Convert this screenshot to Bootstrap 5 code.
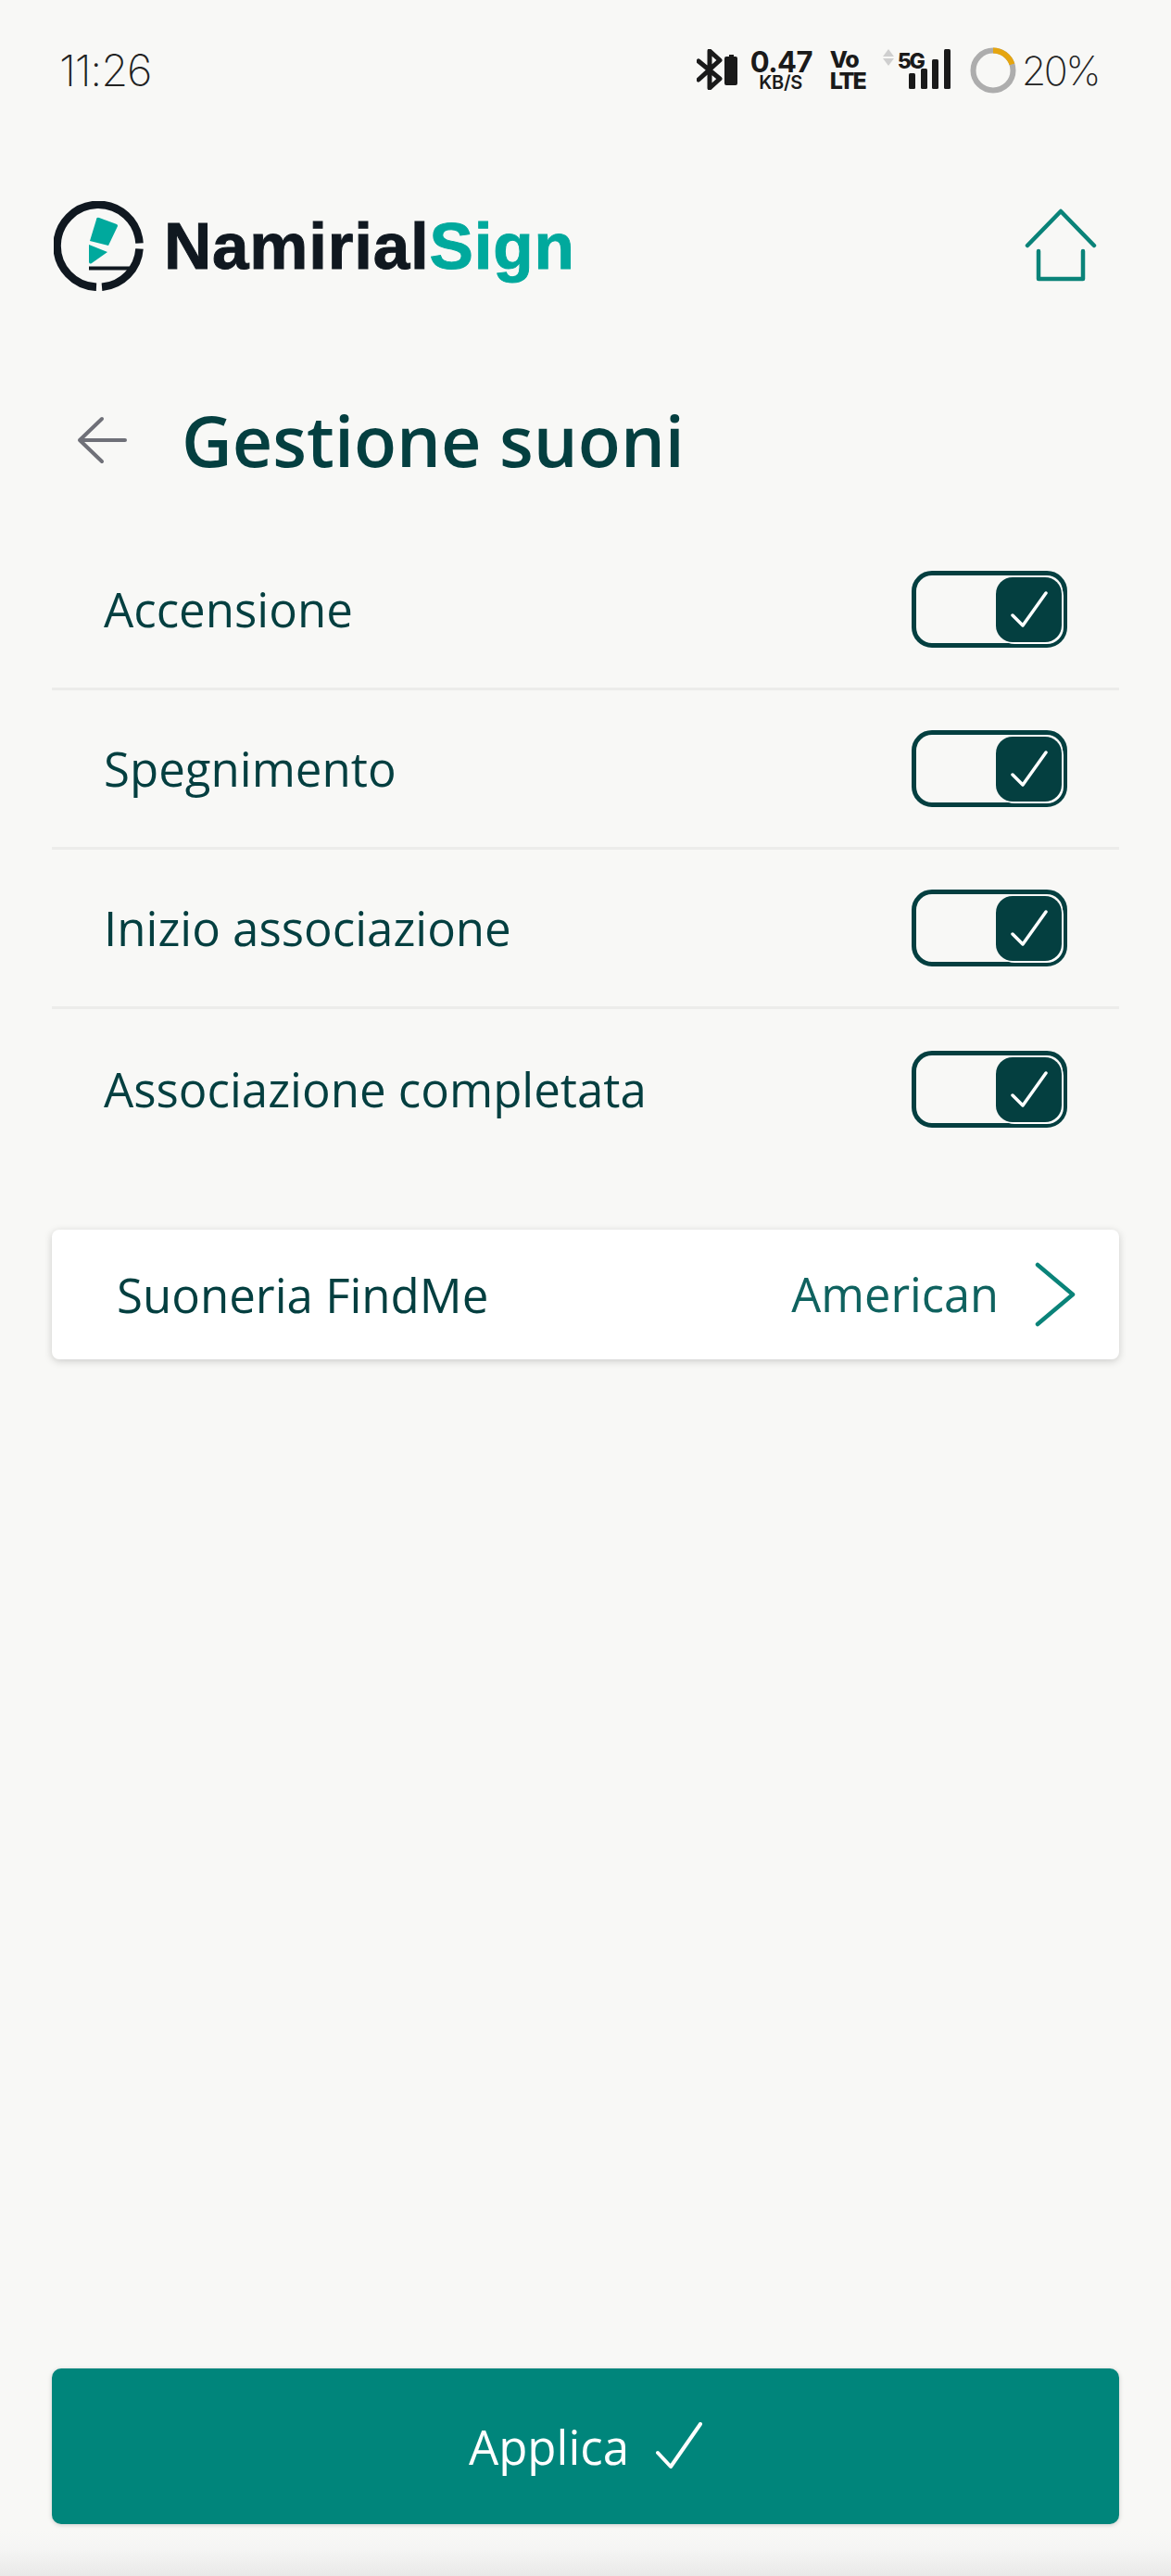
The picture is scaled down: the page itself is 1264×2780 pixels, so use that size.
<!doctype html>
<html lang="it">
<head>
<meta charset="utf-8">
<title>Gestione suoni</title>
<link href="https://cdn.jsdelivr.net/npm/bootstrap@5.3.0/dist/css/bootstrap.min.css" rel="stylesheet">
<style>
html,body{margin:0;background:#f8f8f6}
body{font-family:"Open Sans",sans-serif;color:#043f40}
.app-page{height:2780px;width:1264px;overflow:hidden}
.status-row{height:130px;padding:53px 78px 0 64px}
.clock{font-family:Inter,sans-serif;font-weight:200;font-size:47px;line-height:46px;letter-spacing:-1.2px;color:#222}
.status-icons{height:48px}
.speed-box{margin-left:14px;width:66px;font-family:Inter,sans-serif;font-weight:700;color:#1a1a1a;text-align:center}
.speed-num{font-size:31px;line-height:28px;letter-spacing:-.5px}
.speed-unit{font-size:20px;line-height:16px;font-weight:600;letter-spacing:-.3px}
.volte-box{margin-left:20px;width:38px;font-family:Inter,sans-serif;font-weight:800;color:#1a1a1a;line-height:23px}
.volte-a{font-size:25px;letter-spacing:-1px}
.volte-b{font-size:25px;letter-spacing:-2px}
.updown{margin-left:19px}
.net-label{font-family:Inter,sans-serif;font-weight:800;font-size:23px;line-height:20px;letter-spacing:-2.2px;color:#1a1a1a;width:28px;margin-left:4px;align-self:flex-start;margin-top:3px}
.net-bars{margin-left:-16px}
.batt-ring{margin:-2px 0 0 21px}
.pct{font-family:Inter,sans-serif;font-weight:200;font-size:43px;line-height:46px;letter-spacing:-2.5px;color:#222;margin-left:6px;white-space:nowrap}
.logo-row{height:110px;padding:0 80px 0 58px;margin-top:80px}
.logo-word{font-family:"Liberation Sans",sans-serif;font-weight:700;font-size:71px;line-height:1;letter-spacing:.8px;color:#101820;margin-left:22px;-webkit-text-stroke:1px currentColor}
.logo-word span{color:#00a99d}
.title-row{height:100px;margin-top:105px;padding-left:83px}
.page-title{font-family:"Open Sans",sans-serif;font-weight:600;font-size:75.5px;line-height:100px;color:#043f40;margin:0 0 0 59px}
.sound-list{margin:48px 56px 0;background:transparent}
.sound-list > .sound-item{height:172px;background:transparent;border:0;border-bottom:3px solid #ececea;padding:0 56px;color:#043f40;font-size:51px}
.sound-list > .sound-item:last-child{border-bottom:0}
.sw-box{width:168px;height:83px;border:5px solid #043f40;border-radius:22px;padding:2px 1px 2px 0}
.sw-knob{width:71px;height:70px;background:#043f40;border-radius:18px;box-shadow:2px 2px 0 -1px #fff,2px 2px 0 0 #fff}
.ring-item{margin:66px 56px 0;height:140px;border:0;border-radius:8px;background:#fff;box-shadow:0 2px 8px rgba(0,0,0,.18);padding:0 47px 0 70px;font-size:51px;color:#043f40}
.ring-val{color:#0f625f;margin-right:39px;font-size:50.5px}
.foot-zone{margin-top:auto;height:224px;padding:0 56px;background:linear-gradient(to bottom,#f8f8f6 0,#f8f8f6 176px,#f5f5f4 195px,#e9e9e8 224px)}
.apply-btn{width:100%;height:168px;background:#00857b;color:#fff;border:0;border-radius:10px;font-size:51px;font-family:"Open Sans",sans-serif;box-shadow:0 1px 5px rgba(0,0,0,.18)}
.apply-btn:hover{background:#00857b;color:#fff}
.apply-mark{margin-left:29px}
</style>
</head>
<body>
<div class="app-page d-flex flex-column">
  <div class="status-row d-flex justify-content-between align-items-start">
    <div class="clock">11:26</div>
    <div class="status-icons d-flex align-items-start">
      <svg width="44" height="44" viewBox="0 0 44 44" fill="none" stroke="#1a1a1a" stroke-width="5" stroke-linejoin="round" stroke-linecap="round"><path d="M2 13 25 32 14 42V2l11 10L2 33"/><path stroke="none" fill="#1a1a1a" d="M32 8h3V6h5v2h2a2 2 0 0 1 2 2v27a2 2 0 0 1-2 2H32a2 2 0 0 1-2-2V10a2 2 0 0 1 2-2z"/></svg>
      <div class="speed-box"><div class="speed-num">0.47</div><div class="speed-unit">KB/S</div></div>
      <div class="volte-box"><div class="volte-a">Vo</div><div class="volte-b">LTE</div></div>
      <svg class="updown" width="12" height="18" viewBox="0 0 12 18" fill="#cfcfcf"><path d="M6 0 12 8H0zM0 10h12l-6 8z"/></svg>
      <div class="net-label">5G</div>
      <svg class="net-bars" width="45" height="44" viewBox="0 0 45 44" fill="#1a1a1a"><rect x="0" y="26" width="7" height="17" rx="1.5"/><rect x="13" y="21" width="7" height="22" rx="1.5"/><rect x="25" y="11" width="7" height="32" rx="1.5"/><rect x="38" y="0" width="7" height="43" rx="1.5"/></svg>
      <svg class="batt-ring" width="50" height="50" viewBox="0 0 50 50" fill="none" stroke-width="6"><circle cx="25" cy="25" r="21.5" stroke="#adadad"/><path d="M25 3.500A21.500 21.500 0 0 1 45.400 18.400" stroke="#e5a50f"/></svg>
      <div class="pct">20%</div>
    </div>
  </div>

  <div class="logo-row d-flex align-items-center justify-content-between">
    <div class="d-flex align-items-center">
      <svg width="97" height="97" viewBox="0 0 97 97" fill="none">
        <path d="M92.500 45.500A44.500 44.500 0 1 0 46 92.800" stroke="#101820" stroke-width="8.500"/>
        <path d="M92.500 51.500A44.500 44.500 0 0 1 52 92.800" stroke="#101820" stroke-width="8.500"/>
        <path d="M38 72.500H84" stroke="#101820" stroke-width="4"/>
        <path fill="#00a99d" d="M49 18l19 7a2 2 0 0 1 1 2L59 48 39 43l7-23a2 2 0 0 1 3-2zM38 47l20 8-17 12a2 2 0 0 1-3-1z"/>
      </svg>
      <div class="logo-word">Namirial<span>Sign</span></div>
    </div>
    <svg width="78" height="80" viewBox="0 0 78 80" fill="none" stroke="#0a8379" stroke-width="4.500" stroke-linecap="round" stroke-linejoin="round"><path d="M3 40 39 3l36 37M15 46v30h48V46"/></svg>
  </div>

  <div class="title-row d-flex align-items-center">
    <svg width="54" height="52" viewBox="0 0 54 52" fill="none" stroke="#6f7078" stroke-width="4" stroke-linecap="round" stroke-linejoin="round"><path d="M52 26H3M27 3 3 26l24 23"/></svg>
    <h1 class="page-title">Gestione suoni</h1>
  </div>

  <div class="list-group list-group-flush sound-list">
    <div class="list-group-item sound-item d-flex align-items-center justify-content-between"><span>Accensione</span><div class="sw-box d-flex justify-content-end"><div class="sw-knob d-flex align-items-center justify-content-center"><svg width="40" height="40" viewBox="0 0 40 40" fill="none" stroke="#fff" stroke-width="3.500" stroke-linecap="round" stroke-linejoin="round"><path d="M2 26l11 11L38 2"/></svg></div></div></div>
    <div class="list-group-item sound-item d-flex align-items-center justify-content-between"><span>Spegnimento</span><div class="sw-box d-flex justify-content-end"><div class="sw-knob d-flex align-items-center justify-content-center"><svg width="40" height="40" viewBox="0 0 40 40" fill="none" stroke="#fff" stroke-width="3.500" stroke-linecap="round" stroke-linejoin="round"><path d="M2 26l11 11L38 2"/></svg></div></div></div>
    <div class="list-group-item sound-item d-flex align-items-center justify-content-between"><span>Inizio associazione</span><div class="sw-box d-flex justify-content-end"><div class="sw-knob d-flex align-items-center justify-content-center"><svg width="40" height="40" viewBox="0 0 40 40" fill="none" stroke="#fff" stroke-width="3.500" stroke-linecap="round" stroke-linejoin="round"><path d="M2 26l11 11L38 2"/></svg></div></div></div>
    <div class="list-group-item sound-item d-flex align-items-center justify-content-between"><span>Associazione completata</span><div class="sw-box d-flex justify-content-end"><div class="sw-knob d-flex align-items-center justify-content-center"><svg width="40" height="40" viewBox="0 0 40 40" fill="none" stroke="#fff" stroke-width="3.500" stroke-linecap="round" stroke-linejoin="round"><path d="M2 26l11 11L38 2"/></svg></div></div></div>
  </div>

  <div class="card ring-item flex-row align-items-center justify-content-between">
    <span>Suoneria FindMe</span>
    <div class="d-flex align-items-center"><span class="ring-val">American</span><svg width="44" height="70" viewBox="0 0 44 70" fill="none" stroke="#0a8379" stroke-width="4.500" stroke-linecap="round" stroke-linejoin="round"><path d="M3 3l38 32-38 32"/></svg></div>
  </div>

  <div class="foot-zone">
    <button type="button" class="btn apply-btn d-flex align-items-center justify-content-center">Applica<svg class="apply-mark" width="50" height="52" viewBox="0 0 50 52" fill="none" stroke="#fff" stroke-width="4" stroke-linecap="round" stroke-linejoin="round"><path d="M2 33l14 15L48 2"/></svg></button>
  </div>
</div>
<script src="https://cdn.jsdelivr.net/npm/bootstrap@5.3.0/dist/js/bootstrap.bundle.min.js"></script>
</body>
</html>
